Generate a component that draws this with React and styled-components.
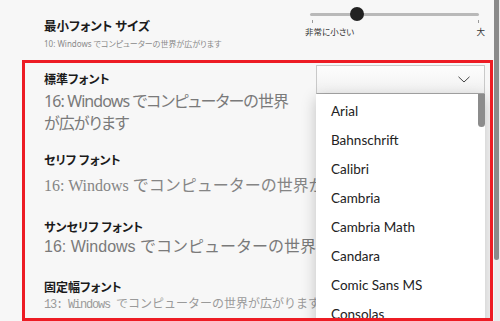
import React from "react";
import styled, { createGlobalStyle } from "styled-components";

const Global = createGlobalStyle`
  html, body { margin: 0; padding: 0; background: #f7f7f7; }
  body { font-family: "Noto Sans", "Noto Sans CJK JP", sans-serif; }
`;

const Page = styled.div`
  display: flex;
  width: 500px;
  height: 321px;
  overflow: hidden;
  background: #f7f7f7;
`;

const Main = styled.main`
  width: 494px;
  flex: none;
  display: flex;
  flex-direction: column;
`;

const PageScroll = styled.div`
  flex: 1;
  background: #ececec;
  display: flex;
  align-items: flex-start;
`;

const PageThumb = styled.div`
  width: 5px;
  height: 260px;
  background: #8a8a8a;
  border-radius: 0 0 3px 3px;
`;

const TopSection = styled.section`
  height: 60px;
  flex: none;
  box-sizing: border-box;
  display: flex;
  justify-content: space-between;
  padding: 0 9px 0 44px;
`;

const TitleBlock = styled.div`
  padding-top: 17px;
`;

const Title = styled.div`
  font: 700 12.5px/18px "Noto Sans CJK JP", sans-serif;
  font-feature-settings: "palt";
  color: #1b1b1b;
`;

const Hint = styled.div`
  margin-top: 2px;
  font: 400 8px/14px "Noto Sans", "Noto Sans CJK JP", sans-serif;
  font-feature-settings: "palt";
  color: #8a8a8a;
`;

const SliderBox = styled.div`
  width: 180px;
  padding-top: 7px;
`;

const TrackArea = styled.div`
  position: relative;
  height: 14px;
  margin: 0 6px 0 5px;
  display: flex;
  align-items: center;
`;

const TrackLine = styled.div`
  flex: 1;
  height: 3px;
  border-radius: 2px;
  background: #b9b9b9;
`;

const Thumb = styled.div`
  position: absolute;
  top: 0;
  left: ${(p) => p.$pos}px;
  width: 14px;
  height: 14px;
  border-radius: 50%;
  background: #222;
`;

const Ticks = styled.div`
  display: flex;
  justify-content: space-between;
  margin: -1px 6px 0 7px;
`;

const Tick = styled.span`
  width: 1px;
  height: 3px;
  background: #9a9a9a;
`;

const ScaleLabels = styled.div`
  display: flex;
  justify-content: space-between;
  margin-top: 2px;
  font: 400 8.5px/12px "Noto Sans CJK JP", sans-serif;
  font-feature-settings: "palt";
  color: #333;
`;

const Frame = styled.section`
  margin-left: 22px;
  width: 471px;
  height: 261px;
  flex: none;
  box-sizing: border-box;
  border: 3px solid #ed1c24;
  overflow: hidden;
  padding: 2px 5px 0 19px;
`;

const Row = styled.div`
  display: flex;
  align-items: flex-start;
  margin-bottom: ${(p) => p.$space || 0}px;
`;

const TextCol = styled.div`
  flex: 1;
  min-width: 0;
  padding-top: ${(p) => p.$pt || 0}px;
`;

const Label = styled.div`
  font: 700 12px/20px "Noto Sans CJK JP", sans-serif;
  font-feature-settings: "palt";
  color: #1b1b1b;
`;

const families = {
  standard: `"Noto Sans", "Noto Sans CJK JP", sans-serif`,
  serif: `"Liberation Serif", "Noto Sans CJK JP", serif`,
  sans: `"Liberation Sans", "Noto Sans CJK JP", sans-serif`,
  mono: `"Liberation Mono", "Noto Sans CJK JP", monospace`,
};

const Sample = styled.div`
  white-space: nowrap;
  margin-top: ${(p) => p.$mt || 0}px;
  line-height: ${(p) => p.$lh}px;
  font-size: ${(p) => p.$size}px;
  font-family: ${(p) => families[p.$kind]};
  font-feature-settings: ${(p) => (p.$kind === "standard" ? '"palt"' : "normal")};
  letter-spacing: ${(p) => (p.$kind === "standard" ? "-0.9px" : "normal")};
  color: ${(p) => (p.$kind === "mono" ? "#9a9a9a" : p.$kind === "serif" ? "#858585" : "#7a7a7a")};
`;

const MonoAscii = styled.span`
  letter-spacing: -1.2px;
`;

const SelectWrap = styled.div`
  position: relative;
  width: 169px;
  flex: none;
  z-index: 2;
`;

const SelectBox = styled.div`
  height: 29px;
  box-sizing: border-box;
  border: 1px solid #c9c9c9;
  border-bottom-color: #a8a8a8;
  background: linear-gradient(to bottom, #fdfdfd, #f1f1f1);
  display: flex;
  align-items: center;
  justify-content: flex-end;
  padding-right: 14px;
`;

const DropList = styled.div`
  position: absolute;
  top: 100%;
  left: 0;
  width: 169px;
  background: #fff;
  box-shadow: 0 4px 14px rgba(0, 0, 0, 0.22);
  padding-top: 3px;
`;

const ListThumb = styled.div`
  position: absolute;
  top: 0;
  right: 0;
  width: 7px;
  height: 33px;
  border-radius: 0 0 4px 4px;
  background: #8c8c8c;
`;

const Item = styled.div`
  height: 29px;
  padding-left: 15px;
  font: 400 13.5px/29px "Lato", "Noto Sans", sans-serif;
  color: #222;
`;

const fonts = [
  "Arial",
  "Bahnschrift",
  "Calibri",
  "Cambria",
  "Cambria Math",
  "Candara",
  "Comic Sans MS",
  "Consolas",
  "Constantia",
];

const Chevron = () => (
  <svg width="12" height="7" viewBox="0 0 12 7">
    <polyline points="0.5,0.8 6,6 11.5,0.8" fill="none" stroke="#444" strokeWidth="1" />
  </svg>
);

const sampleText = "でコンピューターの世界が広がります";

export default function App() {
  return (
    <>
      <Global />
      <Page>
        <Main>
          <TopSection>
            <TitleBlock>
              <Title>最小フォント サイズ</Title>
              <Hint>10: Windows {sampleText}</Hint>
            </TitleBlock>
            <SliderBox>
              <TrackArea>
                <TrackLine />
                <Thumb $pos={40} />
              </TrackArea>
              <Ticks>
                <Tick />
                <Tick />
              </Ticks>
              <ScaleLabels>
                <span>非常に小さい</span>
                <span>大</span>
              </ScaleLabels>
            </SliderBox>
          </TopSection>

          <Frame>
            <Row $space={16}>
              <TextCol $pt={4}>
                <Label>標準フォント</Label>
                <Sample $kind="standard" $size={16} $lh={22} $mt={1}>
                  16: Windows でコンピューターの世界
                  <br />
                  が広がります
                </Sample>
              </TextCol>
              <SelectWrap>
                <SelectBox>
                  <Chevron />
                </SelectBox>
                <DropList>
                  <ListThumb />
                  {fonts.map((f) => (
                    <Item key={f}>{f}</Item>
                  ))}
                </DropList>
              </SelectWrap>
            </Row>

            <Row $space={16}>
              <TextCol>
                <Label>セリフ フォント</Label>
                <Sample $kind="serif" $size={16} $lh={30} $mt={1}>
                  16: Windows {sampleText}
                </Sample>
              </TextCol>
            </Row>

            <Row $space={20}>
              <TextCol>
                <Label>サンセリフ フォント</Label>
                <Sample $kind="sans" $size={16} $lh={20}>
                  16: Windows {sampleText}
                </Sample>
              </TextCol>
            </Row>

            <Row>
              <TextCol>
                <Label>固定幅フォント</Label>
                <Sample $kind="mono" $size={12} $lh={16}>
                  <MonoAscii>13: Windows </MonoAscii>
                  {sampleText}
                </Sample>
              </TextCol>
            </Row>
          </Frame>
        </Main>
        <PageScroll>
          <PageThumb />
        </PageScroll>
      </Page>
    </>
  );
}
